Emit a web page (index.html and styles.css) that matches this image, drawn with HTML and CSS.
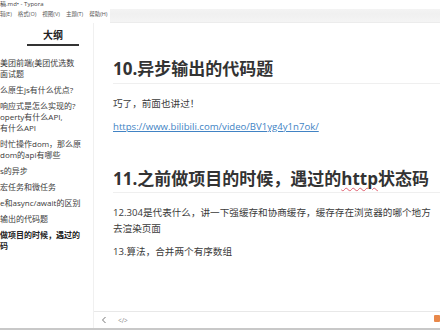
FILE: index.html
```html
<!DOCTYPE html>
<html lang="zh">
<head>
<meta charset="utf-8">
<title>Typora</title>
<link rel="stylesheet" href="styles.css">
</head>
<body>
<div class="window">
  <header class="chrome">
    <div class="titlebar">稿.md• - Typora</div>
    <div class="menubar">
      <nav class="menus">
        <span>辑(E)</span><span>格式(O)</span><span>视图(V)</span><span>主题(T)</span><span>帮助(H)</span>
      </nav>
      <div class="toolstrip"></div>
    </div>
  </header>
  <div class="main">
    <aside class="sidebar">
      <div class="side-title">大纲</div>
      <ul class="outline">
        <li>美团前端(美团优选数<br>面试题</li>
        <li>么原生js有什么优点?</li>
        <li>响应式是怎么实现的?<br>operty有什么API,<br>有什么API</li>
        <li>时忙操作dom，那么原<br>dom的api有哪些</li>
        <li>s的异步</li>
        <li>宏任务和微任务</li>
        <li>e和async/await的区别</li>
        <li>输出的代码题</li>
        <li class="active">做项目的时候，遇过的<br>码</li>
      </ul>
    </aside>
    <section class="editor">
      <div class="doc">
        <h2 class="h first">10.异步输出的代码题</h2>
        <p>巧了，前面也讲过！</p>
        <p><a href="#">https://www.bilibili.com/video/BV1yg4y1n7ok/</a></p>
        <h2 class="h">11.之前做项目的时候，遇过的<span class="spell">http</span>状态码</h2>
        <p class="wide">12.304是代表什么，讲一下强缓存和协商缓存，缓存存在浏览器的哪个地方去渲染页面</p>
        <p>13.算法，合并两个有序数组</p>
      </div>
      <footer class="footer">
        <svg class="chev" width="6" height="8" viewBox="0 0 6 8"><path d="M4.5 1 L1.5 4 L4.5 7" fill="none" stroke="#777" stroke-width="1"/></svg>
        <span class="src">&lt;/&gt;</span>
        <span class="spacer"></span>
        <span class="badge"></span>
      </footer>
    </section>
  </div>
  <div class="bottomline"></div>
</div>
</body>
</html>
```
FILE: styles.css
```css
* { box-sizing: border-box; }
html, body { margin: 0; padding: 0; }
body {
  width: 440px;
  height: 330px;
  overflow: hidden;
  background: #fff;
  font-family: "Open Sans", "Noto Sans CJK SC", sans-serif;
  color: #333;
}
.window { display: flex; flex-direction: column; height: 330px; }

.chrome { display: flex; flex-direction: column; height: 23px; }
.titlebar {
  height: 9px;
  line-height: 9px;
  font-size: 6px;
  color: #444;
  white-space: nowrap;
}
.menubar { display: flex; height: 14px; }
.menus {
  width: 110px;
  display: flex;
  gap: 6px;
  font-size: 5.5px;
  line-height: 10px;
  color: #555;
  white-space: nowrap;
}
.toolstrip {
  flex: 1;
  background: linear-gradient(#f3f3f3, #f0f0f0 40%, #f4f4f4);
  border-bottom: 1px solid #ececec;
}

.main { flex: 1; display: flex; min-height: 0; }
.sidebar {
  width: 94px;
  border-right: 1px solid #f0f0f0;
  padding-top: 6px;
  overflow: hidden;
}
.side-title {
  width: 52px;
  margin-left: 27px;
  text-align: center;
  font-size: 10px;
  font-weight: bold;
  line-height: 12px;
  padding-bottom: 3px;
  border-bottom: 2px solid #333;
  color: #222;
}
.outline {
  list-style: none;
  margin: 8px 0 0 0;
  padding: 0;
  font-size: 8px;
  line-height: 11px;
  color: #3a3a3a;
  white-space: nowrap;
}
.outline li { padding: 2.5px 0; }
.outline li.active { font-weight: bold; color: #222; }

.editor { flex: 1; display: flex; flex-direction: column; min-width: 0; }
.doc { flex: 1; padding-left: 19px; padding-top: 36px; overflow: hidden; }
.h {
  margin: 34px 0 12px 0;
  font-size: 17px;
  line-height: 20.6px;
  font-weight: bold;
  color: #333;
  padding-bottom: 3px;
  border-bottom: 1px solid #efefef;
  white-space: nowrap;
}
.h.first { margin-top: 0; }
.spell { text-decoration: underline wavy #e06070; text-decoration-thickness: 1px; text-underline-offset: 2px; }
p {
  margin: 0 0 8px 0;
  font-size: 9.6px;
  line-height: 15.5px;
  color: #3a3a3a;
}
p.wide { width: 322px; }
a { color: #4183c4; text-decoration: underline; }

.footer {
  height: 17px;
  border-top: 1px solid #e8e8e8;
  display: flex;
  align-items: center;
  padding-left: 7px;
  gap: 11px;
}
.chev { display: block; }
.src { font-size: 6.5px; color: #888; }
.spacer { flex: 1; }
.badge {
  width: 6px;
  height: 7px;
  background: #e8884a;
  border-radius: 1px;
  margin-top: -4px;
}
.bottomline { height: 2px; background: #c8c8c8; }
```
